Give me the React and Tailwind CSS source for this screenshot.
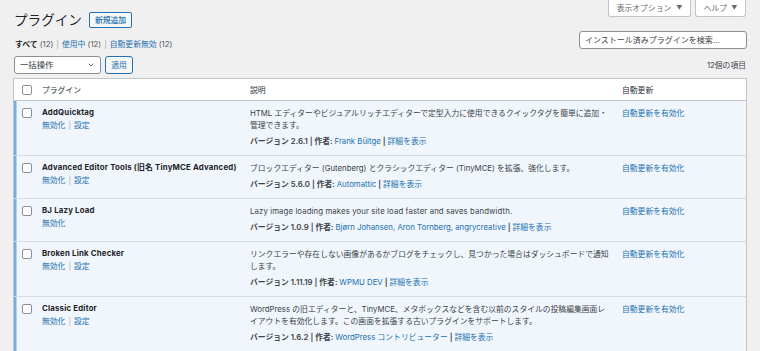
import React from "react";

const plugins = [
  {
    name: "AddQuicktag",
    actions: ["無効化", "設定"],
    desc: [
      "HTML エディターやビジュアルリッチエディターで定型入力に使用できるクイックタグを簡単に追加・",
      "管理できます。",
    ],
    version: "2.6.1",
    author: "Frank Bültge",
  },
  {
    name: "Advanced Editor Tools (旧名 TinyMCE Advanced)",
    actions: ["無効化", "設定"],
    desc: ["ブロックエディター (Gutenberg) とクラシックエディター (TinyMCE) を拡張、強化します。"],
    version: "5.6.0",
    author: "Automattic",
  },
  {
    name: "BJ Lazy Load",
    actions: ["無効化"],
    desc: ["Lazy image loading makes your site load faster and saves bandwidth."],
    latin: true,
    version: "1.0.9",
    author: "Bjørn Johansen, Aron Tornberg, angrycreative",
  },
  {
    name: "Broken Link Checker",
    actions: ["無効化", "設定"],
    desc: [
      "リンクエラーや存在しない画像があるかブログをチェックし、見つかった場合はダッシュボードで通知",
      "します。",
    ],
    version: "1.11.19",
    author: "WPMU DEV",
  },
  {
    name: "Classic Editor",
    actions: ["無効化", "設定"],
    desc: [
      "WordPress の旧エディターと、TinyMCE、メタボックスなどを含む以前のスタイルの投稿編集画面レ",
      "イアウトを有効化します。この画面を拡張する古いプラグインをサポートします。",
    ],
    version: "1.6.2",
    author: "WordPress コントリビューター",
  },
];

function Checkbox() {
  return <span className="block w-[10px] h-[10px] rounded-[2px] border border-[#8c8f94] bg-white" />;
}

function Sep() {
  return <span className="text-[#a7aaad] mx-[3px]">|</span>;
}

export default function App() {
  return (
    <div
      className="w-[760px] h-[351px] overflow-hidden bg-[#f0f0f1] text-[#3c434a] text-[7.8px] leading-[12px] px-[13px]"
      style={{ fontFamily: 'Inter, "Noto Sans CJK JP", sans-serif' }}
    >
      {/* header */}
      <div className="flex justify-between items-start">
        <div className="flex items-center gap-[7px] pt-[12px] pl-[1px]">
          <h1 className="text-[13.6px] leading-[16px] text-[#1d2327] font-normal">プラグイン</h1>
          <span className="h-[16px] px-[5px] flex items-center border border-[#2271b1] rounded-[2px] bg-[#f6f7f7] text-[#2271b1] font-medium">
            新規追加
          </span>
        </div>
        <div className="flex gap-[4px] mr-[1px]">
          <span className="h-[17px] w-[83px] flex items-center justify-center gap-[5px] bg-white border border-t-0 border-[#c3c4c7] rounded-b-[3px] text-[#646970]">
            表示オプション <span className="text-[6px]">▼</span>
          </span>
          <span className="h-[17px] w-[51px] flex items-center justify-center gap-[4px] bg-white border border-t-0 border-[#c3c4c7] rounded-b-[3px] text-[#646970]">
            ヘルプ <span className="text-[6px]">▼</span>
          </span>
        </div>
      </div>

      {/* filter + search */}
      <div className="flex justify-between items-start mt-[3px]">
        <div className="mt-[7px] pl-[2px] text-[#50575e]">
          <span className="font-bold text-[#1d2327]">すべて</span> (12)
          <Sep />
          <span className="text-[#2271b1]">使用中</span> (12)
          <Sep />
          <span className="text-[#2271b1]">自動更新無効</span> (12)
        </div>
        <div className="w-[168px] h-[18px] bg-white border border-[#8c8f94] rounded-[3px] flex items-center px-[5px] text-[8px] text-[#3c434a]">
          インストール済みプラグインを検索...
        </div>
      </div>

      {/* bulk actions */}
      <div className="flex justify-between items-center mt-[6px]">
        <div className="flex items-center gap-[4px] pl-[1px]">
          <div className="w-[87px] h-[18px] bg-white border border-[#8c8f94] rounded-[3px] flex items-center justify-between pl-[5px] pr-[4px] text-[8.4px] text-[#2c3338]">
            <span>一括操作</span>
            <svg width="8" height="8" viewBox="0 0 20 20" className="mr-[1px]">
              <path d="M5 7.5 L10 12.5 L15 7.5" fill="none" stroke="#50575e" strokeWidth="2.2" strokeLinecap="round" strokeLinejoin="round" />
            </svg>
          </div>
          <span className="h-[18px] w-[28px] flex items-center justify-center border border-[#2271b1] rounded-[3px] bg-[#f6f7f7] text-[#2271b1]">
            適用
          </span>
        </div>
        <div className="text-[#3c434a] mr-[1px]">12個の項目</div>
      </div>

      {/* table */}
      <div className="mt-[4px] border-x border-t border-[#c3c4c7] bg-white">
        <div className="grid grid-cols-[22px_208px_372px_1fr] h-[22px] items-center border-b border-[#c3c4c7] text-[#2c3338]">
          <div className="flex justify-center pl-[3px]">
            <Checkbox />
          </div>
          <div className="pl-[6px]">プラグイン</div>
          <div className="pl-[6px]">説明</div>
          <div className="pl-[6px]">自動更新</div>
        </div>
        {plugins.map((p) => (
          <div
            key={p.name}
            className="grid grid-cols-[22px_208px_372px_1fr] bg-[#f0f6fc] border-b border-[#d8dde2]"
          >
            <div className="flex justify-center pt-[7px] pl-[3px] shadow-[inset_2.5px_0_0_#72aee6]">
              <Checkbox />
            </div>
            <div className="pl-[6px] pt-[5px]">
              <div className="font-bold text-[#1d2327] tracking-[0.2px]">{p.name}</div>
              <div className="mt-[1px] text-[#2271b1]">
                {p.actions.map((a, i) => (
                  <span key={a}>
                    {i > 0 && <Sep />}
                    {a}
                  </span>
                ))}
              </div>
            </div>
            <div className="pl-[6px] pt-[6px] pb-[8px] whitespace-nowrap">
              <p className={p.latin ? "tracking-[0.1px]" : ""}>
                {p.desc.map((l, i) => (
                  <React.Fragment key={i}>
                    {i > 0 && <br />}
                    {l}
                  </React.Fragment>
                ))}
              </p>
              <p className="mt-[4px]">
                <span className="font-semibold text-[#3c434a]">バージョン {p.version} | 作者: </span>
                <span className="text-[#2271b1]">{p.author}</span>
                <span className="font-semibold"> | </span>
                <span className="text-[#2271b1]">詳細を表示</span>
              </p>
            </div>
            <div className="pl-[6px] pt-[6px] text-[#2271b1]">自動更新を有効化</div>
          </div>
        ))}
      </div>
    </div>
  );
}
